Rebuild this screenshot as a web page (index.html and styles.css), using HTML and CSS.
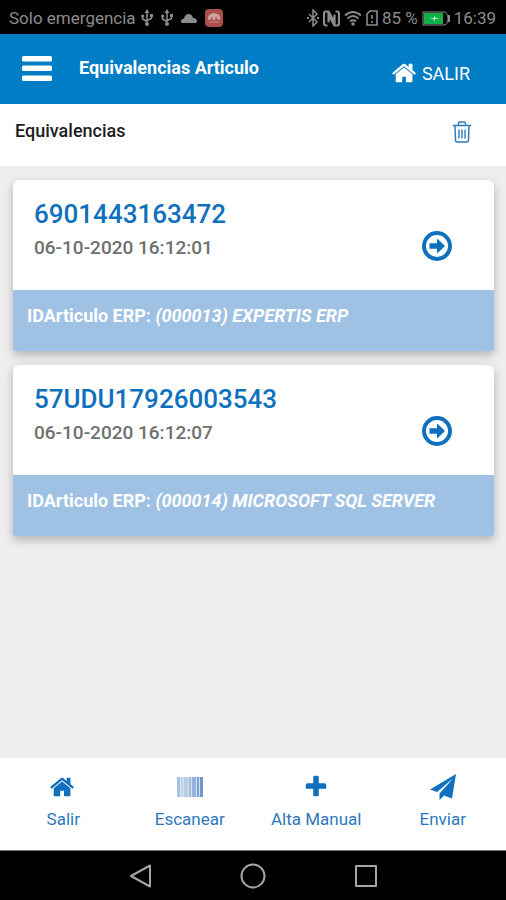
FILE: index.html
```
<!DOCTYPE html>
<html lang="es">
<head>
    <meta charset="UTF-8">
    <meta name="viewport" content="width=device-width, initial-scale=1.0">
    <title>Equivalencias Articulo</title>
    <link rel="stylesheet" href="styles.css">
</head>
<body>
    <!-- icons used more than once -->
    <svg class="sprite" aria-hidden="true">
        <symbol id="icon-home" viewBox="0 0 1792 1792">
            <path d="M1408 992v480q0 26-19 45t-45 19h-384v-384h-256v384h-384q-26 0-45-19t-19-45v-480q0-1 .5-3t.5-3l575-474 575 474q1 2 1 6zm223-69l-62 74q-8 9-21 11h-3q-13 0-21-7l-692-577-692 577q-12 8-24 7-13-2-21-11l-62-74q-8-10-7-23.5t11-21.5l719-599q32-26 76-26t76 26l244 204v-195q0-14 9-23t23-9h192q14 0 23 9t9 23v408l219 182q10 8 11 21.5t-7 23.5z"/>
        </symbol>
        <symbol id="icon-usb" viewBox="0 0 12 18">
            <path d="M6 3v11M1.500 7v3L6 12.500M10.500 7v2.500L6 11.500" fill="none" stroke="currentColor" stroke-width="1.500"/>
            <path d="M6 0l2.500 4h-5z"/>
            <circle cx="6" cy="15" r="2"/>
            <circle cx="1.700" cy="7" r="1.600"/>
            <path d="M9 5h3v3H9z"/>
        </symbol>
        <symbol id="icon-go" viewBox="0 0 32 32">
            <circle cx="16" cy="16" r="13" fill="none" stroke="currentColor" stroke-width="4"/>
            <path d="M8.500 13.300h7.500V9.600q0-1 1-.4l6.300 6.100q.7.700 0 1.400L17 22.800q-1 .5-1-.4v-3.700H8.500z"/>
        </symbol>
    </svg>

    <!-- phone status bar -->
    <div class="status-bar">
        <span>Solo emergencia</span>
        <div class="status-left">
            <svg width="12" height="18"><use href="#icon-usb"/></svg>
            <svg width="12" height="18"><use href="#icon-usb"/></svg>
            <svg width="16" height="10" viewBox="0 0 16 10"><path d="M1.500 10Q0 10 0 8.500 0 6 3 5.500 4 1 7.500 1q3.500 0 4.500 4 4 0 4 3.500 0 1.500-1.500 1.500z"/></svg>
            <svg width="18" height="18" viewBox="0 0 18 18">
                <rect width="18" height="18" rx="4" fill="#a94f4a"/>
                <path d="M3 11q-1-5 3-6 3-2 6 0 4 1 3 6l-3-1-1-3-1 4H8L7 7l-1 3z" fill="#d3a19d"/>
                <path d="M4 13h10" stroke="#c58984"/>
            </svg>
        </div>
        <div class="status-right">
            <svg width="12" height="18" viewBox="0 0 12 18"><path d="M2 5l8 8-4 4V1l4 4-8 8" fill="none" stroke="currentColor" stroke-width="1.500"/><path d="M0 8h2v2H0zM10 8h2v2h-2z"/></svg>
            <svg width="17" height="17" viewBox="0 0 17 17"><path d="M4.500 15.500H3q-2 0-2-2v-10q0-2 2-2h2.500l6 10.500V4.500M12.500 1.500H14q2 0 2 2v10q0 2-2 2h-2.500L5.500 5v7.500" fill="none" stroke="currentColor" stroke-width="2.200"/></svg>
            <svg width="18" height="16" viewBox="0 0 18 16"><path d="M1 5.500q8-7 16 0M3.500 8.500q5.500-5 11 0M6 11.500q3-2.500 6 0" fill="none" stroke="currentColor" stroke-width="1.800"/><circle cx="9" cy="14" r="1.700"/></svg>
            <svg width="12" height="16" viewBox="0 0 12 16"><path d="M1 4l3-3h7v14H1zM6 5v4M6 11v2" fill="none" stroke="currentColor" stroke-width="1.600"/></svg>
            <span>85 %</span>
            <svg width="28" height="15" viewBox="0 0 28 15">
                <path d="M1 1h21q4 0 4 6.500T22 14H1z" fill="none" stroke="currentColor"/>
                <rect x="2" y="2" width="19" height="11" fill="#10b048"/>
                <path d="M7 8l5-1V5l2 2h4l-5 1v2l-2-2z" fill="#d8f5df"/>
                <path d="M27 4v7" stroke="currentColor" stroke-width="2"/>
            </svg>
            <span>16:39</span>
        </div>
    </div>

    <header class="header">
        <button type="button" class="menu-btn" aria-label="Menu">
            <svg width="30" height="26" viewBox="0 0 30 26">
                <rect width="30" height="5.500" rx="1.500"/>
                <rect y="9.500" width="30" height="5.500" rx="1.500"/>
                <rect y="19.500" width="30" height="5.500" rx="1.500"/>
            </svg>
        </button>
        <h1>Equivalencias Articulo</h1>
        <a href="#" class="exit-link">
            <svg width="26" height="26"><use href="#icon-home"/></svg>
            SALIR
        </a>
    </header>

    <div class="sub-header">
        <h2>Equivalencias</h2>
        <button type="button" class="delete-btn" aria-label="Borrar">
            <svg width="18" height="22" viewBox="0 0 18 22">
                <path d="M0 4.500h18" stroke-width="1.500"/>
                <path d="M5.500 4V2.500q0-1.500 1.500-1.500h4q1.500 0 1.500 1.500V4M2 5l.5 14q0 2 2 2h9q2 0 2-2L16 5" stroke-width="1.500"/>
                <path d="M6 8.500v9M9 8.500v9M12 8.500v9" stroke-width="1.400"/>
            </svg>
        </button>
    </div>

    <!-- list of items -->
    <main class="list">
        <article class="card">
            <div class="card-body">
                <div>
                    <h3>6901443163472</h3>
                    <p>06-10-2020 16:12:01</p>
                </div>
                <button type="button" class="go-btn" aria-label="Ver">
                    <svg width="32" height="32"><use href="#icon-go"/></svg>
                </button>
            </div>
            <div class="card-footer">IDArticulo ERP: <em>(000013) EXPERTIS ERP</em></div>
        </article>

        <article class="card">
            <div class="card-body">
                <div>
                    <h3>57UDU17926003543</h3>
                    <p>06-10-2020 16:12:07</p>
                </div>
                <button type="button" class="go-btn" aria-label="Ver">
                    <svg width="32" height="32"><use href="#icon-go"/></svg>
                </button>
            </div>
            <div class="card-footer">IDArticulo ERP: <em>(000014) MICROSOFT SQL SERVER</em></div>
        </article>
    </main>

    <!-- bottom tabs -->
    <nav class="tabs">
        <button type="button">
            <svg width="26" height="26"><use href="#icon-home"/></svg>
            Salir
        </button>
        <button type="button">
            <svg width="26" height="26" viewBox="0 0 26 26">
                <path d="M0 3h26v20H0z" fill="#d3e1f0"/>
                <path d="M0 3h3v20H0z" fill="#a9c4e0"/>
                <path d="M4 3h2v20H4z" fill="#c3d6ea"/>
                <path d="M7 3h4v20H7z" fill="#b9cee6"/>
                <path d="M12 3h2v20h-2z" fill="#a3bde0"/>
                <path d="M15 3h4v20h-4z" fill="#94b2da"/>
                <path d="M20 3h2v20h-2z" fill="#7da2d3"/>
                <path d="M23 3h3v20h-3z" fill="#6c96ce"/>
            </svg>
            Escanear
        </button>
        <button type="button">
            <svg width="26" height="26" viewBox="0 0 1792 1792"><path d="M1600 736v192q0 40-28 68t-68 28h-416v416q0 40-28 68t-68 28h-192q-40 0-68-28t-28-68v-416h-416q-40 0-68-28t-28-68v-192q0-40 28-68t68-28h416v-416q0-40 28-68t68-28h192q40 0 68 28t28 68v416h416q40 0 68 28t28 68z"/></svg>
            Alta Manual
        </button>
        <button type="button">
            <svg width="26" height="26" viewBox="0 0 26 26"><path d="M26 0L0 15.500l7 2.500L23.500 4 9.500 19.500V26l4.500-4.500 8 3z"/></svg>
            Enviar
        </button>
    </nav>

    <!-- phone navigation keys -->
    <div class="phone-nav">
        <button type="button" aria-label="Atras">
            <svg width="24" height="26" viewBox="0 0 24 26"><path d="M22 2.500v21L3 13z"/></svg>
        </button>
        <button type="button" aria-label="Inicio">
            <svg width="26" height="26" viewBox="0 0 26 26"><circle cx="13" cy="13" r="11.500"/></svg>
        </button>
        <button type="button" aria-label="Recientes">
            <svg width="24" height="24" viewBox="0 0 24 24"><rect x="2" y="2" width="20" height="20"/></svg>
        </button>
    </div>
</body>
</html>
```
FILE: styles.css
```
*{
    box-sizing: border-box;
}
body{
    display: flex;
    flex-direction: column;
    min-height: 100vh;
    margin: 0;
    background-color: #eeeeee;
    font-family: Roboto, "Liberation Sans", sans-serif;
}
h1, h2, h3, p{
    margin: 0;
}
svg{
    display: block;
    fill: currentColor;
}
button{
    padding: 0;
    border: none;
    background: none;
    color: inherit;
    font-family: inherit;
}
.sprite{
    position: absolute;
    width: 0;
    height: 0;
}

/* status bar */
.status-bar{
    display: flex;
    align-items: center;
    height: 34px;
    padding: 2px 10px 0 9px;
    background-color: #000000;
    color: #8c8c8c;
    font-size: 17px;
}
.status-left{
    display: flex;
    align-items: center;
    gap: 8px;
    margin-left: 5px;
}
.status-right{
    display: flex;
    align-items: center;
    gap: 4px;
    margin-left: auto;
}

/* header */
.header{
    display: flex;
    align-items: center;
    height: 70px;
    padding: 0 36px 0 22px;
    background-color: #007dc5;
    color: #ffffff;
}
.header h1{
    margin-left: 27px;
    padding-bottom: 4px;
    font-size: 18px;
    font-weight: 700;
}
.exit-link{
    display: flex;
    align-items: center;
    gap: 4px;
    margin-left: auto;
    padding-top: 8px;
    color: #ffffff;
    font-size: 18px;
    text-decoration: none;
}
.sub-header{
    display: flex;
    align-items: center;
    justify-content: space-between;
    height: 62px;
    padding: 0 35px 6px 15px;
    background-color: #ffffff;
}
.sub-header h2{
    padding-bottom: 4px;
    color: #1e1e1e;
    font-size: 18px;
    font-weight: 500;
}
.delete-btn{
    color: #2f7abf;
}
.delete-btn svg{
    fill: none;
    stroke: currentColor;
}

/* cards */
.list{
    display: flex;
    flex: 1;
    flex-direction: column;
    gap: 14px;
    padding: 14px 12px 14px 13px;
}
.card{
    overflow: hidden;
    border-radius: 6px 6px 2px 2px;
    background-color: #ffffff;
    box-shadow: 0 4px 10px rgba(0, 0, 0, 0.25);
}
.card-body{
    display: flex;
    justify-content: space-between;
    height: 110px;
    padding: 18px 41px 0 21px;
}
.card h3{
    color: #0f70bd;
    font-size: 26px;
    font-weight: 500;
    line-height: 32px;
}
.card p{
    margin-top: 6px;
    color: #707070;
    font-size: 19px;
    font-weight: 500;
    line-height: 24px;
}
.go-btn{
    align-self: center;
    padding-top: 4px;
    color: #0f70bd;
}
.card-footer{
    height: 61px;
    padding: 14px;
    background-color: #9ec1e4;
    color: #ffffff;
    font-size: 18px;
    font-weight: 700;
    line-height: 24px;
}

/* tabs */
.tabs{
    display: grid;
    grid-template-columns: repeat(4, 1fr);
    height: 92px;
    background-color: #ffffff;
}
.tabs button{
    display: flex;
    flex-direction: column;
    align-items: center;
    gap: 8px;
    padding-top: 16px;
    color: #2e78be;
    font-size: 17px;
    line-height: 22px;
}
.tabs svg{
    color: #0f70bd;
}

/* phone keys */
.phone-nav{
    display: flex;
    align-items: center;
    justify-content: center;
    gap: 88px;
    height: 50px;
    border-top: 1px solid #777777;
    background-color: #000000;
    color: #a6a6a6;
}
.phone-nav svg{
    fill: none;
    stroke: currentColor;
    stroke-width: 2;
    stroke-linejoin: round;
}
```
